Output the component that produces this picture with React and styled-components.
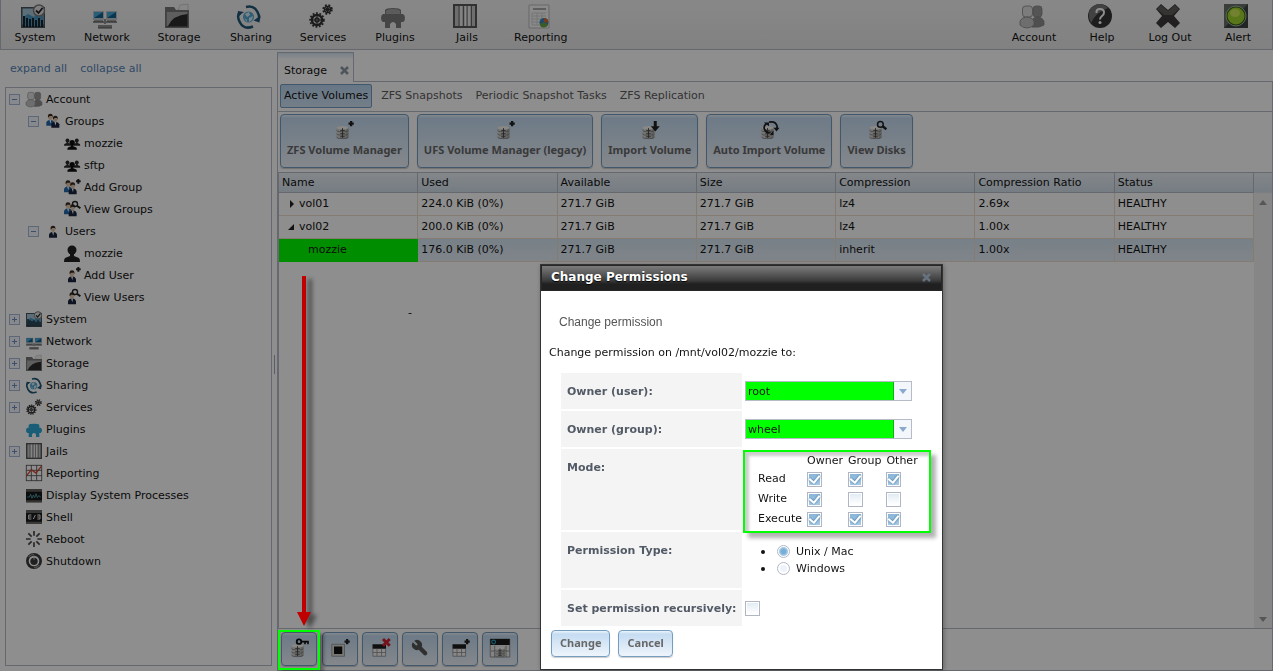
import React from "react";
import styled, { createGlobalStyle, css } from "styled-components";

const GlobalStyle = createGlobalStyle`
  * {
    box-sizing: border-box;
  }
  body {
    margin: 0;
    background: #ffffff;
    color: #131313;
    font-family: "DejaVu Sans", Verdana, sans-serif;
    font-size: 11px;
    line-height: 14px;
  }
  button, input, select {
    font-family: inherit;
    font-size: inherit;
    margin: 0;
  }
`;

/* ---------- icons ---------- */

const person = (x, y, suit, skin = "#e8c8a4", hair = "#3c2c20") => (
  <g transform={`translate(${x} ${y})`}>
    <path d="M0 18v-5q1-3 5-4h2q4 1 5 4v5z" fill={suit} />
    <path d="M4.5 9h3l-1 6z" fill="#fff" />
    <ellipse cx="6" cy="5.5" rx="3" ry="4" fill={skin} />
    <path d="M2.500 6Q1.500 0 6 0t3.500 6L8.500 3.500H5z" fill={hair} />
  </g>
);

const bust = (x, y, s, fill) => (
  <g transform={`translate(${x} ${y}) scale(${s})`} fill={fill}>
    <circle cx="8" cy="5" r="4.500" />
    <path d="M6 8h4v3l5 2q1 1 1 4H0q0-3 1-4l5-2z" />
  </g>
);

const disks = (
  <g>
    <path d="M2 9q0-2.500 8-2.500t8 2.500v12q0 3-8 3t-8-3z" fill="#d0d0cd" />
    <path d="M14 8h4v14l-4 1.500z" fill="#a9a9a6" />
    <ellipse cx="10" cy="9" rx="8" ry="2.300" fill="#f4f4f2" />
    <path d="M2 12.500q0 2 8 2t8-2M2 17q0 2 8 2t8-2M2 21.500q0 2 8 2t8-2" fill="none" stroke="#777" />
    <path d="M10 9.500v13M7 12.500h6M7 17h6M7 21h6" stroke="#4a4a4a" strokeWidth="1.300" />
  </g>
);

const plus = <path d="M21.500 0v7M18 3.500h7" stroke="#222" strokeWidth="3" />;
const lens = (
  <g fill="none" stroke="#222">
    <circle cx="16.500" cy="4.500" r="3.800" strokeWidth="2" />
    <path d="M19.500 7l5 4" strokeWidth="3" />
  </g>
);

const sheet = (
  <g>
    <path d="M2 8h18v15H2z" fill="#f4f4f4" />
    <path d="M2 7h18v6H2z" fill="#1d1d1d" />
    <path d="M2.500 13v10h17V13M2 18h18M8 13v10M14 13v10" fill="none" stroke="#888" />
  </g>
);

const gear = (cx, cy, r, w) => (
  <g fill="none" stroke="#333">
    <circle cx={cx} cy={cy} r={r} strokeWidth={w} />
    <circle cx={cx} cy={cy} r={r + w / 2 + 0.5} strokeWidth="2" strokeDasharray="1.800 1.600" />
    <circle cx={cx} cy={cy} r={r / 2.5} strokeWidth="1.500" />
    <path d={`M${cx - r} ${cy}h${2 * r}M${cx} ${cy - r}v${2 * r}`} strokeWidth="1" />
  </g>
);

const puzzle = (fill, top) => (
  <g>
    <path
      d="M4 6q1-2 8-2t8 2v4h2q2 1 2 4t-2 4h-2v6h-5v-4q-3-4-6 0v4H4v-6H2q-2-1-2-4t2-4h2z"
      fill={fill}
    />
    <path d="M5 7q1-2 7-2t7 2v3H5z" fill={top} />
  </g>
);

const glyphs = {
  system: (
    <g>
      <path d="M0 3h24v21H0z" fill="#45555f" />
      <path d="M1.500 4.500h21v16h-21z" fill="#a5c6d8" />
      <path d="M2 13l5-3 6 3 4-5 5 3v11H2z" fill="#4a98c2" />
      <path d="M3 23V12M6 23v-9M9 23v-8M12 23v-9M15 23v-7M18 23v-9M21 23v-7" stroke="#111" strokeWidth="1.700" />
      <circle cx="18" cy="6.500" r="5.500" fill="#e3e3e3" stroke="#7b7b7b" strokeWidth="1.500" />
      <path d="M15 6.500l2.500 2.500L21.500 4" fill="none" stroke="#222" strokeWidth="1.800" />
    </g>
  ),
  network: (
    <g>
      <path d="M0 7h11v9H0zM13 7h11v9H13z" fill="#bfc6ca" />
      <path d="M1 8h9v6H1zM14 8h9v6h-9z" fill="#12618e" />
      <path d="M1 8h9L1 14zM14 8h9l-9 6z" fill="#4aa9d8" />
      <path d="M0 17h11v2H0zM13 17h11v2H13zM11 15h2v5h-2zM5 21h14v3H5z" fill="#8f8f8f" />
      <path d="M1 17h9M14 17h9M5 24h14" stroke="#555" />
    </g>
  ),
  storage: (
    <g>
      <path d="M13 6l2-5 8-1v7z" fill="#f1f1ee" stroke="#aaa" strokeWidth="0.500" />
      <path d="M0 3h9l2 3h13v18H0z" fill="#777" />
      <path d="M1.500 8h21v14.500h-21z" fill="#2b2b2b" />
      <path d="M1.500 8h21v2Q8 11 3 22H1.500z" fill="#aaa" />
    </g>
  ),
  sharing: (
    <g fill="none">
      <circle cx="11.500" cy="13" r="5.500" fill="#53a7d2" />
      <path d="M8 10l4-2 1 3-3 2zM12 14l4-2-1 4-3 2zM7 14l3 2v2z" fill="#d7edf7" />
      <path d="M9 3Q17 1 20.500 8t-.5 8M16 22.500Q7 26 3 18.500T3.500 9" stroke="#1f5777" strokeWidth="2.500" />
      <path d="M23.500 11.500l-1 7-6-2zM0 13l1-6 6 1z" fill="#1f5777" />
    </g>
  ),
  services: <g>{gear(8, 16, 5, 2.5)}{gear(18.5, 5.5, 3, 1.5)}</g>,
  plugins: puzzle("#7d7d7d", "#a5a5a5"),
  pluginsBlue: puzzle("#2fa7d4", "#2fa7d4"),
  jails: (
    <g>
      <path d="M0 0h24v24H0z" fill="#656565" />
      <path d="M2 2h20v20H2z" fill="#c5c5c5" />
      <path d="M6 2v20M10.500 2v20M14 2v20M18.500 2v20" stroke="#666" />
      <path d="M8 2v20M12.500 2v20M16 2v20" stroke="#f6f6f6" strokeWidth="1.500" />
      <path d="M1 1h22v22H1z" fill="none" stroke="#555" strokeWidth="1.500" />
    </g>
  ),
  report: (
    <g>
      <path d="M2 1h20v23H2z" fill="#f8f8f8" stroke="#bbb" />
      <path d="M6 4h13v2H6z" fill="#aaa" />
      <path d="M5 9h14M5 12h14M5 15h14M5 18h10M5 21h8M5 9v12M10 9v12M15 9v10" stroke="#d2d2d2" />
      <circle cx="17" cy="18.500" r="4.500" fill="#3a87bb" />
      <path d="M17 14v4.500h4.500Q21 14 17 14z" fill="#d26a33" />
      <path d="M13 20l4-1.500 4 2q-1 3-4.500 3T13 20z" fill="#69a642" />
    </g>
  ),
  chart: (
    <g fill="none">
      <path d="M.5 0v24M8 0v24M16 0v24M23.500 0v24M0 .5h24M0 8h24M0 16h24M0 23.500h24" stroke="#555" strokeWidth="1.300" />
      <path d="M1 16l7-9 7 5 8-10" stroke="#dc432f" strokeWidth="2" />
    </g>
  ),
  account: (
    <g stroke="#858585" strokeWidth="0.800">
      <rect x="13" y="2" width="9" height="11" rx="3" fill="#999" />
      <path d="M12 22v-5q1-4 5.500-4t6.500 4v4q-4 3-12 2z" fill="#8f8f8f" />
      <rect x="2.500" y="2" width="10" height="11" rx="3" fill="#dedede" />
      <path d="M0 21v-4q2-4 7-4t7 4v4q-3 3-7 3t-7-3z" fill="#c5c5c5" />
    </g>
  ),
  help: (
    <g>
      <circle cx="12" cy="12" r="12" fill="#353535" />
      <path d="M1 14A11 11 0 0 1 20 4Q8 8 3 19z" fill="#777" />
      <path d="M8.500 9Q8 5 12 5t4 3.500q0 2-2 3.500t-2 3.500" fill="none" stroke="#fff" strokeWidth="2" />
      <circle cx="12" cy="18.500" r="1.500" fill="#fff" />
    </g>
  ),
  logout: (
    <g>
      <path d="M5 0l7 6 7-6 5 5-6 7 6 7-5 5-7-6-7 6-5-5 6-7-6-7z" fill="#3c3838" />
      <path d="M5 1l7 6 7-6 4 4-7 6H8L1 5z" fill="#625d5d" />
    </g>
  ),
  alert: (
    <g>
      <path d="M0 0h24v24H0z" fill="#3e4443" />
      <path d="M0 0h24L0 24z" fill="#687069" />
      <circle cx="12" cy="12" r="10" fill="#336018" stroke="#a7b59a" />
      <circle cx="12" cy="12" r="8.500" fill="#a0d62c" />
      <ellipse cx="11" cy="9" rx="5" ry="4" fill="#cde957" />
    </g>
  ),
  groups: <g>{person(2, 1, "#2469ac")}{person(9.5, 4, "#1c2440")}</g>,
  addGroup: <g>{person(0, 2, "#2469ac")}{person(7, 5, "#1c2440")}{plus}</g>,
  viewGroup: <g>{person(0, 2, "#2469ac")}{person(7, 5, "#1c2440")}{lens}</g>,
  user: person(6, 4, "#1c2440"),
  addUser: <g>{person(6, 5, "#1c2440")}{plus}</g>,
  viewUser: <g>{person(6, 5, "#1c2440")}{lens}</g>,
  group: <g>{bust(0, 5, 0.65, "#2b2b2b")}{bust(14, 5, 0.65, "#2b2b2b")}{bust(5, 7, 0.9, "#111")}</g>,
  single: bust(0, 0, 1.5, "#222"),
  processes: (
    <g>
      <path d="M0 3h24v20H0z" fill="#171717" />
      <path d="M0 3h24v4H0zM0 20h24v3H0z" fill="#625e5a" />
      <path d="M2 15h3l2-4 2 6 2-5 2 4 2-6 2 6 2-3 3 2" fill="none" stroke="#52a6b5" strokeWidth="1.300" />
    </g>
  ),
  shell: (
    <g>
      <path d="M0 2h24v20H0z" fill="#1d1b1b" />
      <path d="M0 3h24v3H0zM0 19h24v2H0z" fill="#666" />
      <path d="M8 9H4v6h4M11 15l3-6M17 9h4v6h-4M5 12h3M17 12h3" fill="none" stroke="#eee" strokeWidth="1.500" />
    </g>
  ),
  reboot: (
    <path
      d="M12 0v7M12 17v7M0 12h7M17 12h7M3.500 3.500l5 5M15.500 15.500l5 5M20.500 3.500l-5 5M8.500 15.500l-5 5"
      stroke="#484848"
      strokeWidth="2.500"
    />
  ),
  shutdown: (
    <g fill="none">
      <circle cx="12" cy="12" r="10" stroke="#3c3c3c" strokeWidth="4" />
      <path d="M4 6a10 10 0 0 1 8-4M20 18a10 10 0 0 1-8 4" stroke="#888" strokeWidth="2" />
      <circle cx="12" cy="12.500" r="5.500" fill="#3a3a3a" />
      <path d="M12 4v6" stroke="#c7c7c7" strokeWidth="1.500" />
    </g>
  ),
  diskAdd: <g>{disks}{plus}</g>,
  diskImport: (
    <g>
      {disks}
      <path d="M19 0v8" stroke="#222" strokeWidth="4" />
      <path d="M13 7h12l-6 7z" fill="#222" />
    </g>
  ),
  diskAuto: (
    <g>
      {disks}
      <path d="M9 3q-5 4-3 8 3 6 8 4M12 1.500q9-2 11 6l-1 3" fill="none" stroke="#222" strokeWidth="2.300" />
      <path d="M5 2h7v5zM13 18l5-5v6zM18 9h8l-4 5z" fill="#222" />
    </g>
  ),
  diskView: <g>{disks}{lens}</g>,
  diskKey: (
    <g>
      {disks}
      <circle cx="12" cy="3.500" r="3" fill="none" stroke="#111" strokeWidth="2.500" />
      <path d="M15 3.500h10M20 3v4M24 3v4" stroke="#111" strokeWidth="2.200" />
    </g>
  ),
  dataset: (
    <g>
      <path d="M1 7h17v16H1z" fill="#d8d8d4" stroke="#888" />
      <path d="M4 10h11v10H4z" fill="#111" />
      {plus}
    </g>
  ),
  sheetRemove: <g>{sheet}<path d="M16 0l9 9M25 0l-9 9" stroke="#cf2430" strokeWidth="4" /></g>,
  sheetAdd: <g>{sheet}{plus}</g>,
  wrench: (
    <path
      transform="translate(24 0) scale(-1 1)"
      d="M14.700 6.300a1 1 0 0 0 0 1.400l1.600 1.600a1 1 0 0 0 1.400 0l3.770-3.770a6 6 0 0 1-7.940 7.940l-6.910 6.910a2.120 2.120 0 0 1-3-3l6.910-6.910a6 6 0 0 1 7.940-7.940l-3.760 3.760z"
      fill="#555"
      stroke="#555"
      strokeWidth="1.500"
    />
  ),
  snapshot: (
    <g>
      <path d="M-1 0h26v24H-1z" fill="#ededed" stroke="#777" />
      <path d="M-1 0h26v8H-1z" fill="#1a1a1a" />
      <circle cx="3.500" cy="4" r="2.500" fill="none" stroke="#2ca3c2" strokeWidth="1.500" />
      <path d="M0 16h25M5 9v15M20 9v15" stroke="#777" />
      <g transform="translate(4 5) scale(.8)">{disks}</g>
    </g>
  ),
};

const IconSvg = styled.svg`
  display: block;
  flex: none;
  overflow: visible;
`;

const Icon = ({ name, size = 24 }) => (
  <IconSvg width={size} height={size} viewBox="0 0 24 24" aria-hidden="true">
    {glyphs[name]}
  </IconSvg>
);

/* ---------- page ---------- */

const Page = styled.div`
  display: flex;
  flex-direction: column;
  min-height: 100vh;
`;

const TopBar = styled.header`
  display: flex;
  justify-content: space-between;
  height: 50px;
  border: solid #b5bcc7;
  border-width: 0 1px 1px 1px;
  background: linear-gradient(#f4f4f4, #e8e8e8);
`;

const TopMenu = styled.nav`
  display: flex;
  margin-left: -2px;
`;

const TopItem = styled.button`
  display: flex;
  flex-direction: column;
  align-items: center;
  gap: 3px;
  min-width: ${(props) => props.$width}px;
  padding: 4px 11px 0;
  border: 0;
  background: none;
  color: #131313;
  line-height: 14px;
  cursor: pointer;

  svg {
    margin-right: 4px;
  }
`;

const Main = styled.div`
  display: flex;
  flex: 1;
`;

const Sidebar = styled.aside`
  display: flex;
  flex-direction: column;
  width: 272px;
  padding: 0 0 5px 5px;
`;

const TreeLinks = styled.div`
  display: flex;
  gap: 13px;
  padding: 12px 5px 11px;

  a {
    color: #5686b8;
    text-decoration: none;
  }
`;

const Tree = styled.ul`
  flex: 1;
  margin: 0;
  padding: 0;
  border: 1px solid #b5bcc7;
  list-style: none;
`;

const TreeRow = styled.li`
  display: flex;
  align-items: center;
  height: 22px;
  padding-left: ${(props) => 3 + props.$level * 19}px;
`;

const Slot = styled.span`
  display: flex;
  width: 17px;
`;

const Expander = styled.button`
  width: 11px;
  height: 11px;
  padding: 0;
  border: 1px solid #a9bad6;
  background:
    linear-gradient(#6f8fbd, #6f8fbd) center / 5px 1px no-repeat,
    ${(props) =>
      props.$open
        ? ""
        : "linear-gradient(#6f8fbd, #6f8fbd) center / 1px 5px no-repeat,"}
    #f4f7fc;
`;

const TreeLabel = styled.span`
  padding: 1px 0 0 4px;
`;

const Splitter = styled.div`
  display: flex;
  align-items: center;
  width: 5px;
  padding: 8px 0 0 2px;

  &::before {
    content: "";
    width: 1px;
    height: 19px;
    background: #a0a8b8;
  }
`;

const Content = styled.main`
  display: flex;
  flex: 1;
  flex-direction: column;
  min-width: 0;
  padding-top: 2px;
`;

const TabStrip = styled.div`
  display: flex;
  height: 30px;
  border-bottom: 1px solid #b5bcc7;
`;

const Tab = styled.div`
  display: flex;
  align-items: center;
  gap: 13px;
  height: 30px;
  padding: 6px 4px 0 6px;
  border: 1px solid #b5bcc7;
  border-bottom: 0;
  background: linear-gradient(#d5e6f5, #ffffff 6px);
`;

const CloseButton = styled.button`
  display: flex;
  padding: 0;
  border: 0;
  background: none;
`;

const Pane = styled.section`
  display: flex;
  flex: 1;
  flex-direction: column;
  border: 1px solid #b5bcc7;
  border-top: 0;
`;

const SubTabs = styled.nav`
  display: flex;
  gap: 5px;
  padding: 2px;
  height: 30px;
  border-bottom: 1px solid #b5bcc7;
`;

const SubTab = styled.button`
  height: 24px;
  padding: 0 3px 2px;
  border: 1px solid transparent;
  border-radius: 2px;
  background: none;
  color: #5c5c5c;

  ${(props) =>
    props.$active &&
    css`
      border-color: #759dc0;
      background: linear-gradient(#b9d5ef, #cfe2f3);
      color: #131313;
    `}
`;

const buttonLook = css`
  border: 1px solid #759dc0;
  border-radius: 4px;
  background: linear-gradient(#edf5fc, #c5dcf2 3px, #eef4fb);
  box-shadow: 0 1px 1px rgba(0, 0, 0, 0.2);
  color: #686868;
  font-family: "Noto Sans", sans-serif;
  font-weight: bold;
`;

const ActionBar = styled.div`
  display: flex;
  gap: 8px;
  padding: 2px 2px 4px;
`;

const ActionButton = styled.button`
  ${buttonLook}
  display: flex;
  flex-direction: column;
  align-items: center;
  gap: 3px;
  height: 54px;
  padding: 6px 6px 0;
  line-height: 16px;
`;

const GridArea = styled.div`
  display: flex;
  flex: 1;
  border: 1px solid #b5bcc7;
  border-width: 1px 0 1px 1px;
`;

const GridMain = styled.div`
  flex: 1;
`;

const Grid = styled.table`
  width: 100%;
  border-collapse: separate;
  border-spacing: 0;
  table-layout: fixed;
`;

const HeadCell = styled.th`
  height: 20px;
  padding: 1px 3px 0;
  border: solid #b5bcc7;
  border-width: 0 1px 1px 0;
  background: linear-gradient(#edf2f7, #d3e0eb);
  font-weight: normal;
  text-align: left;
`;

const Cell = styled.td`
  height: 23px;
  padding: 0 3px 1px;
  border: solid #eedfce;
  border-width: 0 1px 1px 0;
  background: ${(props) =>
    props.$selected ? "linear-gradient(#d6e6f4, #e6eff7)" : "#ffffff"};
  ${(props) => props.$marked && "background: #00ff00; border-color: #00ff00;"}
`;

const NameInner = styled.span`
  display: flex;
  align-items: center;
  gap: 5px;
  padding-left: ${(props) => (props.$child ? 26 : 5)}px;
`;

const Note = styled.p`
  margin: 0;
  padding: 44px 0 0 129px;
`;

const ScrollRail = styled.div`
  display: flex;
  flex-direction: column;
  justify-content: space-between;
  align-items: center;
  width: 18px;
  padding-bottom: 6px;
  background: #f1f1f1;
`;

const RailHead = styled.div`
  width: 100%;
  height: 20px;
  margin-bottom: 7px;
  border-bottom: 1px solid #dbe5ee;
  background: linear-gradient(#edf2f7, #d3e0eb);
`;

const RailTop = styled.div`
  display: flex;
  flex-direction: column;
  align-items: center;
  width: 100%;
`;

const ToolRow = styled.div`
  display: flex;
  gap: 4px;
  padding: 3px 3px 4px;
`;

const ToolButton = styled.button`
  ${buttonLook}
  display: flex;
  align-items: center;
  justify-content: center;
  width: 36px;
  height: 34px;
  padding: 0 0 2px;
`;

const Callout = styled.div`
  position: relative;
  display: flex;
  margin-right: 1px;
`;

const CalloutBox = styled.span`
  position: absolute;
  inset: -2px -3px -4px;
  z-index: 3;
  border: 2px solid #00ff00;
  box-shadow: 4px 4px 3px rgba(0, 0, 0, 0.3);
  pointer-events: none;
`;

const Arrow = styled.svg`
  position: absolute;
  left: 15px;
  bottom: 100%;
  margin-bottom: 6px;
  z-index: 3;
  overflow: visible;
  filter: drop-shadow(6px 3px 2px rgba(0, 0, 0, 0.45));
  pointer-events: none;
`;

const Backdrop = styled.div`
  position: fixed;
  inset: 0;
  z-index: 2;
  background: rgba(0, 0, 0, 0.443);
`;

/* ---------- dialog ---------- */

const Dialog = styled.section`
  position: fixed;
  top: 264px;
  left: 540px;
  z-index: 4;
  width: 403px;
  border: 1px solid #333333;
  background: #ffffff;
  box-shadow: 1px 1px 5px rgba(0, 0, 0, 0.3);
`;

const DialogTitle = styled.header`
  display: flex;
  align-items: center;
  justify-content: space-between;
  height: 26px;
  padding: 0 10px 2px 9px;
  background: linear-gradient(#7c7c7c, #3c3c3c 60%, #202020 75%, #202020);
  border: 1px solid #262626;

  h1 {
    margin: 0;
    color: #ffffff;
    font-size: 12px;
    line-height: 16px;
    text-shadow: 0 1px 1px #000000;
  }
`;

const DialogBody = styled.form`
  padding: 24px 10px 12px 8px;
`;

const Crumb = styled.p`
  margin: 0 0 17px 10px;
  color: #555555;
  font-family: "Liberation Sans", Arial, sans-serif;
  font-size: 12px;
`;

const Lead = styled.p`
  margin: 0 0 13px;
`;

const Fields = styled.div`
  display: flex;
  flex-direction: column;
  gap: 2px;
  padding-left: 12px;
`;

const Field = styled.div`
  display: grid;
  grid-template-columns: 181px 1fr;
  align-items: ${(props) => (props.$center ? "center" : "stretch")};
  gap: 3px;
  min-height: ${(props) => props.$height || 36}px;
`;

const FieldLabel = styled.label`
  padding: 12px 6px 10px;
  background: #f4f4f4;
  color: #525a66;
  font-weight: bold;
  white-space: nowrap;
`;

const Combo = styled.div`
  position: relative;
  width: 167px;

  select {
    display: block;
    width: 100%;
    height: 20px;
    padding: 0 20px 0 2px;
    appearance: none;
    border: 1px solid #b5bcc7;
    border-radius: 0;
    background: linear-gradient(to right, #00ff00 147px, #12b012 147px, #12b012 148px, #f3f7fc 148px);
    color: #131313;
  }

  svg {
    position: absolute;
    top: 8px;
    right: 5px;
    pointer-events: none;
  }
`;

const ModeBox = styled.div`
  position: relative;
  align-self: start;
  padding: 4px 0 0 11px;
`;

const ModeOutline = styled.span`
  position: absolute;
  inset: 1px 1px -4px -2px;
  border: 2px solid #00ff00;
  box-shadow: 5px 5px 4px rgba(0, 0, 0, 0.3), inset 4px 4px 3px rgba(0, 0, 0, 0.2);
  pointer-events: none;
`;

const ModeTable = styled.table`
  border-spacing: 0;

  th {
    padding: 0 3px 0 2px;
    font-weight: normal;
    text-align: left;
  }
  thead th {
    height: 16px;
  }
  tbody td {
    height: 20px;
    padding: 0 2px;
  }
`;

const Tick = styled.input`
  appearance: none;
  display: flex;
  align-items: center;
  justify-content: center;
  width: 15px;
  height: 15px;
  border: 1px solid #b0b6c4;
  background: linear-gradient(#dfeaf3, #ffffff 90%);
  box-shadow: inset 0 0 0 1px #ffffff;

  &:checked {
    background: linear-gradient(#86b4d8, #a9cce7);
  }
  &:checked::after {
    content: "";
    width: 5px;
    height: 8px;
    margin-bottom: 2px;
    border: solid #ffffff;
    border-width: 0 2px 2px 0;
    transform: rotate(40deg);
    filter: drop-shadow(0 0 1px #2f6590);
  }
`;

const Options = styled.ul`
  margin: 0;
  padding: 11px 0 0 16px;
  list-style: none;

  li {
    display: flex;
    align-items: center;
    height: 17px;
  }
  li::before {
    content: "";
    width: 4px;
    height: 4px;
    margin-right: 12px;
    border-radius: 50%;
    background: #131313;
  }
  label {
    display: flex;
    align-items: center;
    gap: 6px;
  }
`;

const Radio = styled.input`
  appearance: none;
  width: 13px;
  height: 13px;
  border: 1px solid #b0b6c4;
  border-radius: 50%;
  background: radial-gradient(#edf3f8 0 3px, #ffffff 4px);

  &:checked {
    background: radial-gradient(#76add6 0 2px, #a5cae5 4px, #ffffff 5px);
  }
`;

const DialogButtons = styled.div`
  display: flex;
  gap: 8px;
  padding: 4px 0 0 2px;
`;

const DialogButton = styled.button`
  ${buttonLook}
  height: 27px;
  padding: 0 8px 2px;
  line-height: 16px;
`;

/* ---------- data ---------- */

const leftMenu = [
  ["System", "system"],
  ["Network", "network"],
  ["Storage", "storage"],
  ["Sharing", "sharing"],
  ["Services", "services"],
  ["Plugins", "plugins"],
  ["Jails", "jails"],
  ["Reporting", "report"],
];

const rightMenu = [
  ["Account", "account"],
  ["Help", "help"],
  ["Log Out", "logout"],
  ["Alert", "alert"],
];

// label, icon, level, expander state
const tree = [
  ["Account", "account", 0, "open"],
  ["Groups", "groups", 1, "open"],
  ["mozzie", "group", 2],
  ["sftp", "group", 2],
  ["Add Group", "addGroup", 2],
  ["View Groups", "viewGroup", 2],
  ["Users", "user", 1, "open"],
  ["mozzie", "single", 2],
  ["Add User", "addUser", 2],
  ["View Users", "viewUser", 2],
  ["System", "system", 0, "closed"],
  ["Network", "network", 0, "closed"],
  ["Storage", "storage", 0, "closed"],
  ["Sharing", "sharing", 0, "closed"],
  ["Services", "services", 0, "closed"],
  ["Plugins", "pluginsBlue", 0],
  ["Jails", "jails", 0, "closed"],
  ["Reporting", "chart", 0],
  ["Display System Processes", "processes", 0],
  ["Shell", "shell", 0],
  ["Reboot", "reboot", 0],
  ["Shutdown", "shutdown", 0],
];

const actions = [
  ["ZFS Volume Manager", "diskAdd"],
  ["UFS Volume Manager (legacy)", "diskAdd"],
  ["Import Volume", "diskImport"],
  ["Auto Import Volume", "diskAuto"],
  ["View Disks", "diskView"],
];

const columns = ["Name", "Used", "Available", "Size", "Compression", "Compression Ratio", "Status"];

const volumes = [
  ["vol01", "224.0 KiB (0%)", "271.7 GiB", "271.7 GiB", "lz4", "2.69x", "HEALTHY"],
  ["vol02", "200.0 KiB (0%)", "271.7 GiB", "271.7 GiB", "lz4", "1.00x", "HEALTHY"],
  ["mozzie", "176.0 KiB (0%)", "271.7 GiB", "271.7 GiB", "inherit", "1.00x", "HEALTHY"],
];

const tools = [
  ["Create Dataset", "dataset"],
  ["Destroy Volume", "sheetRemove"],
  ["Edit Options", "wrench"],
  ["Create zvol", "sheetAdd"],
  ["Create Snapshot", "snapshot"],
];

const modes = [
  ["Read", true, true, true],
  ["Write", true, false, false],
  ["Execute", true, true, true],
];

const Triangle = ({ points, fill = "#222222", w = 7, h = 7 }) => (
  <IconSvg width={w} height={h} aria-hidden="true">
    <polygon points={points} fill={fill} />
  </IconSvg>
);

const Cross = ({ color }) => (
  <IconSvg width="9" height="9" viewBox="0 0 9 9" aria-hidden="true">
    <path d="M1 1l7 7M8 1L1 8" stroke={color} strokeWidth="2.500" />
  </IconSvg>
);

const TreePanel = () => (
  <Sidebar>
    <TreeLinks>
      <a href="#expand">expand all</a>
      <a href="#collapse">collapse all</a>
    </TreeLinks>
    <Tree>
      {tree.map(([label, icon, level, state], i) => (
        <TreeRow key={i} $level={level}>
          <Slot>
            {state && <Expander $open={state === "open"} aria-label={`Toggle ${label}`} />}
          </Slot>
          <Icon name={icon} size={16} />
          <TreeLabel>{label}</TreeLabel>
        </TreeRow>
      ))}
    </Tree>
  </Sidebar>
);

const VolumeGrid = () => (
  <GridArea>
    <GridMain>
      <Grid>
        <thead>
          <tr>
            {columns.map((name) => (
              <HeadCell key={name}>{name}</HeadCell>
            ))}
          </tr>
        </thead>
        <tbody>
          {volumes.map(([name, ...rest], i) => (
            <tr key={name}>
              <Cell $marked={i === 2}>
                <NameInner $child={i === 2}>
                  {i === 0 && <Triangle points="3,0 7,4 3,8" h={8} />}
                  {i === 1 && <Triangle points="7,1 7,7 1,7" />}
                  {name}
                </NameInner>
              </Cell>
              {rest.map((value, j) => (
                <Cell key={j} $selected={i === 2}>{value}</Cell>
              ))}
            </tr>
          ))}
        </tbody>
      </Grid>
      <Note>-</Note>
    </GridMain>
    <ScrollRail>
      <RailTop>
        <RailHead />
        <Triangle points="0,5 4,0 8,5" fill="#9b9b9b" w={8} h={5} />
      </RailTop>
      <Triangle points="0,0 8,0 4,5" fill="#9b9b9b" w={8} h={5} />
    </ScrollRail>
  </GridArea>
);

const ComboField = ({ id, label, value }) => (
  <Field $center>
    <FieldLabel htmlFor={id}>{label}</FieldLabel>
    <Combo>
      <select id={id} defaultValue={value}>
        <option>{value}</option>
      </select>
      <svg width="8" height="5" aria-hidden="true">
        <polygon points="0,0 8,0 4,5" fill="#8aa9cf" />
      </svg>
    </Combo>
  </Field>
);

const PermissionsDialog = () => (
  <Dialog role="dialog" aria-labelledby="dialog-title">
    <DialogTitle>
      <h1 id="dialog-title">Change Permissions</h1>
      <CloseButton aria-label="Close">
        <Cross color="#66737f" />
      </CloseButton>
    </DialogTitle>
    <DialogBody>
      <Crumb>Change permission</Crumb>
      <Lead>Change permission on /mnt/vol02/mozzie to:</Lead>
      <Fields>
        <ComboField id="owner-user" label="Owner (user):" value="root" />
        <ComboField id="owner-group" label="Owner (group):" value="wheel" />
        <Field $height={81}>
          <FieldLabel as="div">Mode:</FieldLabel>
          <ModeBox>
            <ModeOutline />
            <ModeTable>
              <thead>
                <tr>
                  <td />
                  <th>Owner</th>
                  <th>Group</th>
                  <th>Other</th>
                </tr>
              </thead>
              <tbody>
                {modes.map(([label, ...flags]) => (
                  <tr key={label}>
                    <th>{label}</th>
                    {flags.map((on, i) => (
                      <td key={i}>
                        <Tick
                          type="checkbox"
                          defaultChecked={on}
                          aria-label={`${label} ${["Owner", "Group", "Other"][i]}`}
                        />
                      </td>
                    ))}
                  </tr>
                ))}
              </tbody>
            </ModeTable>
          </ModeBox>
        </Field>
        <Field $height={56}>
          <FieldLabel as="div">Permission Type:</FieldLabel>
          <Options>
            <li>
              <label>
                <Radio type="radio" name="ptype" defaultChecked />
                Unix / Mac
              </label>
            </li>
            <li>
              <label>
                <Radio type="radio" name="ptype" />
                Windows
              </label>
            </li>
          </Options>
        </Field>
        <Field $center>
          <FieldLabel htmlFor="recursive">Set permission recursively:</FieldLabel>
          <Tick id="recursive" type="checkbox" />
        </Field>
      </Fields>
      <DialogButtons>
        <DialogButton type="button">Change</DialogButton>
        <DialogButton type="button">Cancel</DialogButton>
      </DialogButtons>
    </DialogBody>
  </Dialog>
);

const App = () => (
  <>
    <GlobalStyle />
    <Page>
      <TopBar>
        <TopMenu>
          {leftMenu.map(([label, icon]) => (
            <TopItem key={label} $width={72}>
              <Icon name={icon} />
              {label}
            </TopItem>
          ))}
        </TopMenu>
        <TopMenu>
          {rightMenu.map(([label, icon]) => (
            <TopItem key={label} $width={68}>
              <Icon name={icon} />
              {label}
            </TopItem>
          ))}
        </TopMenu>
      </TopBar>
      <Main>
        <TreePanel />
        <Splitter />
        <Content>
          <TabStrip>
            <Tab>
              Storage
              <CloseButton aria-label="Close tab">
                <Cross color="#8d97a3" />
              </CloseButton>
            </Tab>
          </TabStrip>
          <Pane>
            <SubTabs>
              <SubTab $active>Active Volumes</SubTab>
              <SubTab>ZFS Snapshots</SubTab>
              <SubTab>Periodic Snapshot Tasks</SubTab>
              <SubTab>ZFS Replication</SubTab>
            </SubTabs>
            <ActionBar>
              {actions.map(([label, icon]) => (
                <ActionButton key={label}>
                  <Icon name={icon} size={18} />
                  {label}
                </ActionButton>
              ))}
            </ActionBar>
            <VolumeGrid />
            <ToolRow>
              <Callout>
                <ToolButton aria-label="Change Permissions">
                  <Icon name="diskKey" size={18} />
                </ToolButton>
                <CalloutBox />
                <Arrow width="16" height="350" aria-hidden="true">
                  <path d="M6 0h4v336h5l-7 14-7-14h5z" fill="#c00000" />
                </Arrow>
              </Callout>
              {tools.map(([label, icon]) => (
                <ToolButton key={label} aria-label={label}>
                  <Icon name={icon} size={18} />
                </ToolButton>
              ))}
            </ToolRow>
          </Pane>
        </Content>
      </Main>
    </Page>
    <Backdrop />
    <PermissionsDialog />
  </>
);

export default App;
